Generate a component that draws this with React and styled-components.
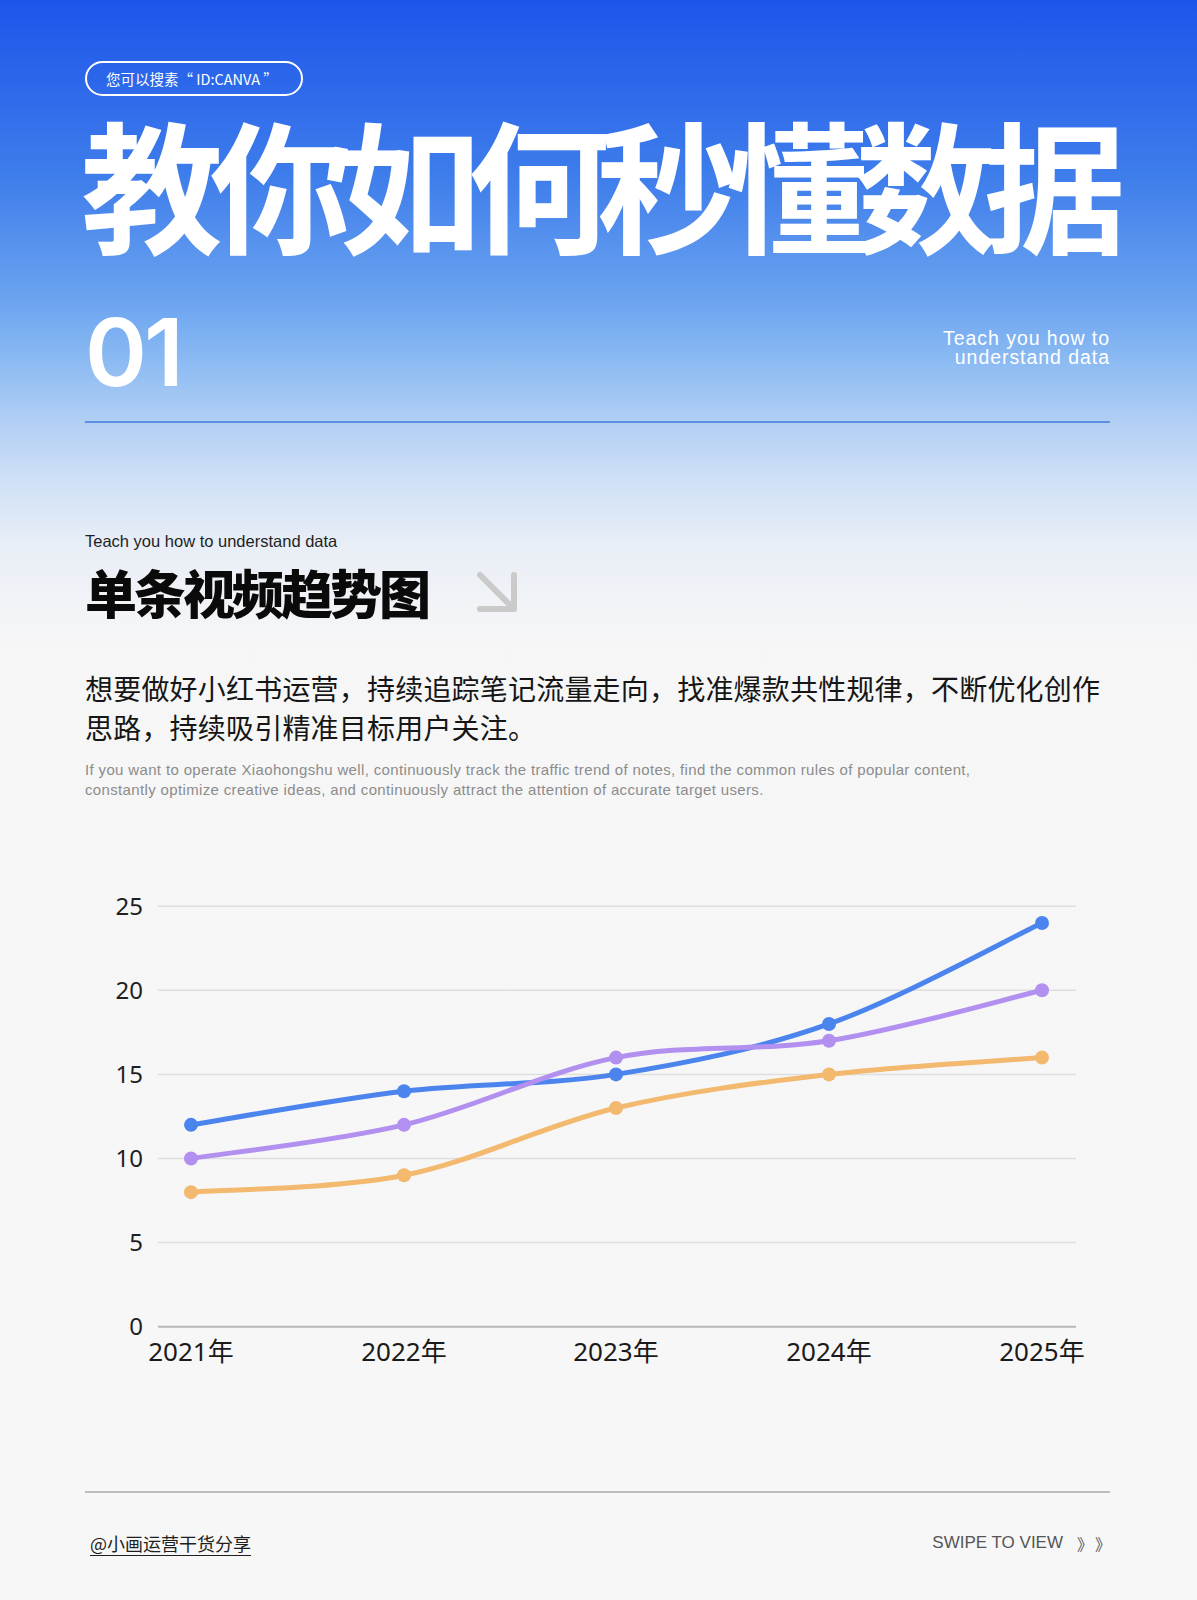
import React from "react";
import styled, { createGlobalStyle } from "styled-components";

const GlobalStyle = createGlobalStyle`
  html, body {
    margin: 0;
    padding: 0;
    background: #f7f7f7;
  }
  * {
    box-sizing: border-box;
  }
`;

const CN = `"Noto Sans CJK SC", "Noto Sans", sans-serif`;

const Page = styled.div`
  width: 1197px;
  min-height: 1600px;
  padding: 61px 87px 0 85px;
  background: linear-gradient(
    180deg,
    #1d55ea 0%,
    #3e7deb 11%,
    #6da5f0 19%,
    #8bbaf2 22.5%,
    #aecdf4 26%,
    #cfe0f6 30%,
    #e8eef6 34%,
    #f6f6f7 40%,
    #f7f7f7 100%
  );
  font-family: ${CN};
`;

const Pill = styled.div`
  display: inline-flex;
  align-items: center;
  width: 218px;
  height: 35px;
  padding-left: 19px;
  border: 2px solid #ffffff;
  border-radius: 18px;
  color: #ffffff;
  font-family: ${CN};
  font-size: 14.5px;
  line-height: 20px;
  white-space: nowrap;
  overflow: hidden;
`;

const Title = styled.h1`
  margin: 12px 0 0 -4px;
  font-family: ${CN};
  font-weight: 700;
  font-size: 142px;
  line-height: 146px;
  letter-spacing: -13px;
  color: #ffffff;
  white-space: nowrap;
`;

const NumberRow = styled.div`
  display: flex;
  justify-content: space-between;
  align-items: flex-start;
  margin-top: 51px;
`;

const BigNumber = styled.div`
  font-family: "Inter", "Liberation Sans", sans-serif;
  font-weight: 600;
  font-size: 94px;
  line-height: 94px;
  letter-spacing: -3px;
  color: #ffffff;
`;

const SideNote = styled.div`
  margin-top: 24px;
  font-family: "Liberation Sans", sans-serif;
  font-size: 19.5px;
  line-height: 19px;
  letter-spacing: 0.95px;
  text-align: right;
  color: #ffffff;
`;

const Divider = styled.div`
  height: 2px;
  margin-top: ${({ $gap }) => $gap}px;
  background: ${({ $color }) => $color};
`;

const Eyebrow = styled.div`
  margin-top: 108px;
  font-family: "Liberation Sans", sans-serif;
  font-size: 16.5px;
  line-height: 20px;
  color: #1f1f1f;
`;

const HeadingRow = styled.div`
  display: flex;
  align-items: center;
  gap: 48px;
  margin-top: 15px;
`;

const Heading = styled.h2`
  margin: 0;
  font-family: ${CN};
  font-weight: 900;
  font-size: 52px;
  line-height: 52px;
  letter-spacing: -3px;
  color: #0a0a0a;
`;

const ArrowIcon = styled.svg`
  width: 43px;
  height: 43px;
  flex: none;
`;

const Lead = styled.p`
  margin: 51px 0 0;
  font-family: ${CN};
  font-size: 28px;
  line-height: 39px;
  letter-spacing: 0.2px;
  color: #161616;
`;

const Translation = styled.p`
  margin: 13px 0 0;
  max-width: 905px;
  font-family: "Liberation Sans", sans-serif;
  font-size: 15px;
  line-height: 19.5px;
  letter-spacing: 0.35px;
  color: #8c8c8c;
`;

const ChartWrap = styled.div`
  margin-top: 91px;
  height: 480px;
`;

const Footer = styled.div`
  display: flex;
  justify-content: space-between;
  align-items: center;
  margin-top: 38px;
  padding: 0 6px 0 5px;
`;

const Handle = styled.span`
  font-family: ${CN};
  font-size: 18px;
  line-height: 24px;
  color: #1f1f1f;
  text-decoration: underline;
  text-underline-offset: 4px;
`;

const Swipe = styled.span`
  display: flex;
  align-items: center;
  gap: 14px;
  font-family: "Liberation Sans", sans-serif;
  font-size: 17px;
  line-height: 24px;
  color: #555555;
`;

const Chevrons = styled.span`
  font-family: ${CN};
  font-size: 16px;
  letter-spacing: 2px;
  margin-right: -9px;
  text-spacing-trim: space-all;
`;

const years = ["2021年", "2022年", "2023年", "2024年", "2025年"];
const series = [
  { color: "#f2b96f", values: [8, 9, 13, 15, 16] },
  { color: "#4c84ee", values: [12, 14, 15, 18, 24] },
  { color: "#b290f0", values: [10, 12, 16, 17, 20] },
];

// chart geometry, in px inside the svg
const xs = [106, 319, 531, 744, 957];
const gridLeft = 73;
const gridRight = 991;
const yZero = 436.7;
const perUnit = 16.82;
const yOf = (v) => yZero - v * perUnit;

function smoothPath(pts) {
  let d = `M${pts[0][0]},${pts[0][1]}`;
  for (let i = 0; i < pts.length - 1; i++) {
    const p0 = pts[i - 1] || pts[i];
    const p1 = pts[i];
    const p2 = pts[i + 1];
    const p3 = pts[i + 2] || p2;
    const c1x = p1[0] + (p2[0] - p0[0]) / 6;
    const c1y = p1[1] + (p2[1] - p0[1]) / 6;
    const c2x = p2[0] - (p3[0] - p1[0]) / 6;
    const c2y = p2[1] - (p3[1] - p1[1]) / 6;
    d += ` C${c1x},${c1y} ${c2x},${c2y} ${p2[0]},${p2[1]}`;
  }
  return d;
}

const TrendChart = () => (
  <svg width="1025" height="480" viewBox="0 0 1025 480">
    {[0, 5, 10, 15, 20, 25].map((v) => (
      <g key={v}>
        <line
          x1={gridLeft}
          x2={gridRight}
          y1={yOf(v)}
          y2={yOf(v)}
          stroke={v === 0 ? "#b8b8b8" : "#dedede"}
          strokeWidth={v === 0 ? 2 : 1.5}
        />
        <text
          x={58}
          y={yOf(v) + 8.5}
          textAnchor="end"
          fontFamily="Noto Sans, sans-serif"
          fontSize="24"
          fill="#1f1f1f"
        >
          {v}
        </text>
      </g>
    ))}
    {years.map((y, i) => (
      <text
        key={y}
        x={xs[i]}
        y={471}
        textAnchor="middle"
        fontFamily="Noto Sans, Noto Sans CJK SC, sans-serif"
        fontSize="26"
        fill="#1a1a1a"
      >
        {y}
      </text>
    ))}
    {series.map((s) => {
      const pts = s.values.map((v, i) => [xs[i], yOf(v)]);
      return (
        <g key={s.color}>
          <path
            d={smoothPath(pts)}
            fill="none"
            stroke={s.color}
            strokeWidth="5"
            strokeLinecap="round"
          />
          {pts.map(([x, y], i) => (
            <circle key={i} cx={x} cy={y} r="7" fill={s.color} />
          ))}
        </g>
      );
    })}
  </svg>
);

export default function App() {
  return (
    <>
      <GlobalStyle />
      <Page>
        <Pill>您可以搜素“ ID:CANVA ”</Pill>
        <Title>教你如何秒懂数据</Title>
        <NumberRow>
          <BigNumber>01</BigNumber>
          <SideNote>
            Teach you how to
            <br />
            understand data
          </SideNote>
        </NumberRow>
        <Divider $gap={22} $color="#5d8fe2" />

        <Eyebrow>Teach you how to understand data</Eyebrow>
        <HeadingRow>
          <Heading>单条视频趋势图</Heading>
          <ArrowIcon viewBox="0 0 43 43" fill="none">
            <path
              d="M4 4 L38 38 M38 4 V38 H4"
              stroke="#cacaca"
              strokeWidth="6"
              strokeLinecap="round"
              strokeLinejoin="round"
            />
          </ArrowIcon>
        </HeadingRow>

        <Lead>
          想要做好小红书运营，持续追踪笔记流量走向，找准爆款共性规律，不断优化创作思路，持续吸引精准目标用户关注。
        </Lead>
        <Translation>
          If you want to operate Xiaohongshu well, continuously track the traffic
          trend of notes, find the common rules of popular content, constantly
          optimize creative ideas, and continuously attract the attention of
          accurate target users.
        </Translation>

        <ChartWrap>
          <TrendChart />
        </ChartWrap>

        <Divider $gap={121} $color="#bdbdbd" />
        <Footer>
          <Handle>@小画运营干货分享</Handle>
          <Swipe>
            SWIPE TO VIEW
            <Chevrons>》》</Chevrons>
          </Swipe>
        </Footer>
      </Page>
    </>
  );
}
